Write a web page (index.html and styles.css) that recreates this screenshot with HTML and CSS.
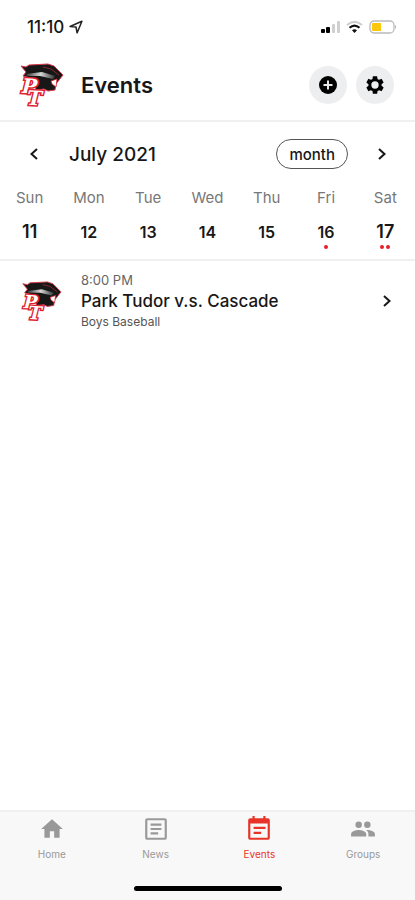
FILE: index.html
```html
<!DOCTYPE html>
<html lang="en">
<head>
<meta charset="utf-8">
<meta name="viewport" content="width=device-width, initial-scale=1">
<title>Events</title>
<link rel="stylesheet" href="styles.css">
</head>
<body>
<svg class="defs" aria-hidden="true">
  <defs>
    <linearGradient id="brim" x1="0" x2="1" y1="0" y2="0">
      <stop offset="0" stop-color="#333"/><stop offset=".5" stop-color="#d8d8d8"/><stop offset="1" stop-color="#333"/>
    </linearGradient>
    <symbol id="logo" viewBox="0 0 46 44">
      <path d="M3 3 8 4 11 2 30 1 36 3 45 12 38 21 37 27 30 28 26 26 18 27 16 16 5 13 8 9Z" fill="#171717" stroke="#d8394a" stroke-width="1" stroke-linejoin="round"/>
      <path d="M8 11 24 9 37 13 35 16 22 13 9 13Z" fill="url(#brim)"/>
      <path d="M25 4 33 6 41 12" fill="none" stroke="#8e2530" stroke-width="1"/>
      <path d="M39 16 33 18 34 21 38 24Z" fill="#fff" stroke="#d71f2f" stroke-width=".8"/>
      <g class="monogram">
        <text x="4" y="30" transform="rotate(3 8 24)">P</text>
        <text x="9" y="42" transform="rotate(3 14 36)">T</text>
      </g>
    </symbol>
    <symbol id="chevron" viewBox="0 0 10 14">
      <path d="M2 2 7.500 7 2 12" fill="none" stroke="currentColor" stroke-width="2"/>
    </symbol>
  </defs>
</svg>
<div class="app">
  <div class="status">
    <div class="clock">11:10
      <svg width="14" height="14" viewBox="0 0 13 13" aria-hidden="true"><path d="M1 6 12 1.200 7.500 12 6.500 6.500Z" fill="none" stroke="#222" stroke-width="1.400" stroke-linejoin="round"/></svg>
    </div>
    <div class="signals">
      <svg width="19" height="14" viewBox="0 0 19 14" aria-hidden="true"><rect x="0" y="9" width="4" height="4" rx="1"/><rect x="5" y="7" width="4" height="6" rx="1"/><g fill="#d0d0d0"><rect x="11" y="4" width="3" height="9" rx="1"/><rect x="16" y="1" width="3" height="12" rx="1"/></g></svg>
      <svg width="17" height="14" viewBox="0 0 17 14" fill="none" aria-hidden="true"><path d="M1 5Q8.500-1.500 16 5" stroke="#ccc" stroke-width="1.800"/><path d="M3.500 7.800Q8.500 3.300 13.500 7.800" stroke="#111" stroke-width="2.200"/><path d="M6 10.200Q8.500 8.400 11 10.200L8.500 13Z" fill="#111"/></svg>
      <svg width="28" height="14" viewBox="0 0 28 14" aria-hidden="true"><rect x="1" y="1" width="24" height="12" rx="4" fill="#fff" stroke="#bbb" stroke-width="1.300"/><path d="M4 3H12V11H4Q3 11 3 10V4Q3 3 4 3Z" fill="#fdc70c"/><path d="M26 5Q28 7 26 9Z" fill="#aaa"/></svg>
    </div>
  </div>
  <header class="header">
    <svg class="logo" role="img" aria-label="Park Tudor"><use href="#logo"/></svg>
    <h1>Events</h1>
    <button class="round" aria-label="Add event"><svg width="20" height="20" viewBox="0 0 20 20" aria-hidden="true"><circle cx="10" cy="10" r="9"/><path d="M10 5.500V14.500M5.500 10H14.500" stroke="#e8eaeb" stroke-width="2"/></svg></button>
    <button class="round" aria-label="Settings"><svg width="22" height="22" viewBox="0 0 24 24" aria-hidden="true"><path fill-rule="evenodd" d="M19.140 12.940c.040-.300.060-.610.060-.940s-.020-.640-.070-.940l2.030-1.580a.49.49 0 0 0 .120-.610l-1.920-3.320a.49.49 0 0 0-.590-.220l-2.390.960a7 7 0 0 0-1.620-.940l-.360-2.540A.48.48 0 0 0 13.920 2.400h-3.840a.48.48 0 0 0-.480.410l-.360 2.540a7 7 0 0 0-1.620.940l-2.390-.960a.48.48 0 0 0-.590.220L2.740 8.870a.48.48 0 0 0 .120.610l2.030 1.580a7 7 0 0 0 0 1.880l-2.030 1.580a.49.49 0 0 0-.120.610l1.920 3.320c.120.220.370.290.590.220l2.390-.960a7 7 0 0 0 1.620.940l.360 2.540c.050.240.240.410.480.410h3.840c.240 0 .440-.170.470-.410l.360-2.540a7 7 0 0 0 1.620-.940l2.390.960c.220.080.470 0 .590-.220l1.920-3.320a.48.48 0 0 0-.120-.610zM12 16a4 4 0 1 1 0-8 4 4 0 0 1 0 8z"/></svg></button>
  </header>
  <section class="calendar">
    <div class="month-bar">
      <button class="step" aria-label="Previous week"><svg class="chevron back"><use href="#chevron"/></svg></button>
      <h2>July 2021</h2>
      <button class="mode">month</button>
      <button class="step" aria-label="Next week"><svg class="chevron"><use href="#chevron"/></svg></button>
    </div>
    <table class="week">
      <thead><tr><th>Sun</th><th>Mon</th><th>Tue</th><th>Wed</th><th>Thu</th><th>Fri</th><th>Sat</th></tr></thead>
      <tbody><tr>
        <td class="big">11<div class="dots"></div></td><td>12<div class="dots"></div></td><td>13<div class="dots"></div></td><td>14<div class="dots"></div></td><td>15<div class="dots"></div></td>
        <td>16<div class="dots"><i></i></div></td><td class="big">17<div class="dots"><i></i><i></i></div></td>
      </tr></tbody>
    </table>
  </section>
  <main>
    <a class="event" href="#event">
      <svg class="logo small" aria-hidden="true"><use href="#logo"/></svg>
      <div class="details">
        <div class="time">8:00 PM</div>
        <div class="title">Park Tudor v.s. Cascade</div>
        <div class="team">Boys Baseball</div>
      </div>
      <svg class="chevron" aria-hidden="true"><use href="#chevron"/></svg>
    </a>
  </main>
  <footer class="bottom">
    <nav>
      <a href="#home"><svg viewBox="0 0 24 24" aria-hidden="true"><path d="M10 20v-6h4v6h5v-8h3L12 3 2 12h3v8z"/></svg>Home</a>
      <a href="#news"><svg viewBox="0 0 24 24" aria-hidden="true"><rect x="3" y="3" width="18" height="18" rx="1" fill="none" stroke="currentColor" stroke-width="2"/><path d="M7 7h10v2H7zM7 11h10v2H7zM7 15h7v2H7z"/></svg>News</a>
      <a href="#events" class="active" aria-current="page"><svg viewBox="0 0 24 24" aria-hidden="true"><path fill-rule="evenodd" d="M20 2h-2V0h-2v2H8V0H6v2H4a2 2 0 0 0-2 2v16c0 1.100.900 2 2 2h16a2 2 0 0 0 2-2V4a2 2 0 0 0-2-2zm0 18H4V7h16zM7 10h11v2H7zM7 14.500h7v2H7z"/></svg>Events</a>
      <a href="#groups"><svg viewBox="0 0 24 24" aria-hidden="true"><path d="M16 11a3 3 0 1 0 0-6 3 3 0 0 0 0 6zm-8 0a3 3 0 1 0 0-6 3 3 0 0 0 0 6zm0 2c-2.330 0-7 1.170-7 3.500V19h14v-2.500C15 14.170 10.330 13 8 13zm8 0c-.290 0-.620.020-.970.050C16.190 13.890 17 15.020 17 16.500V19h6v-2.500c0-2.330-4.670-3.500-7-3.500z"/></svg>Groups</a>
    </nav>
    <div class="handle"></div>
  </footer>
</div>
</body>
</html>
```
FILE: styles.css
```css
* { box-sizing: border-box; }
body { margin: 0; background: #fff; color: #171717; font-family: Inter, "Liberation Sans", sans-serif; }
h1, h2 { margin: 0; font-weight: 600; }
button { padding: 0; border: 0; background: none; color: inherit; font: inherit; cursor: pointer; }
a { color: inherit; text-decoration: none; }
svg { display: block; flex: none; }
.defs { position: absolute; width: 0; height: 0; }
.app { display: flex; flex-direction: column; min-height: 100vh; }

.status { display: flex; justify-content: space-between; align-items: center; height: 54px; padding: 0 18px 0 27px; }
.clock { display: flex; align-items: center; gap: 5px; font-size: 17px; font-weight: 500; }
.signals { display: flex; align-items: center; gap: 6px; }

.header { display: flex; align-items: center; gap: 9px; height: 68px; padding: 0 21px 4px 18px; border-bottom: 2px solid #f0f0f0; }
.header h1 { flex: 1; padding-left: 8px; font-size: 22px; }
.logo { width: 46px; height: 44px; }
.small { width: 42px; height: 40px; }
.monogram { font: italic 700 20px "DejaVu Serif", "Liberation Serif", serif; fill: #fff; stroke: #e0202f; stroke-width: 3px; paint-order: stroke; }
.round { display: grid; place-items: center; width: 38px; height: 38px; border-radius: 50%; background: #eceeef; }

.calendar { border-bottom: 2px solid #f0f0f0; }
.month-bar { display: flex; align-items: center; height: 64px; padding: 0 18px 0 19px; }
.month-bar h2 { flex: 1; padding-left: 20px; font-size: 19px; font-weight: 500; }
.step { display: grid; place-items: center; width: 30px; height: 30px; }
.chevron { width: 10px; height: 14px; }
.back { transform: scaleX(-1); }
.mode { height: 30px; margin-right: 19px; padding: 0 12px; border: 1px solid #555; border-radius: 15px; font-size: 15px; font-weight: 500; }
.week { width: 100%; table-layout: fixed; border-collapse: collapse; text-align: center; }
.week th { height: 22px; padding: 0; color: #777; font-size: 15px; font-weight: 400; }
.week td { height: 51px; padding: 11px 0 0; font-size: 16px; font-weight: 600; line-height: 26px; vertical-align: top; }
.week .big { font-size: 18px; }
.dots { display: flex; justify-content: center; gap: 2px; height: 4px; }
.dots i { width: 4px; height: 4px; border-radius: 50%; background: #e8202a; }

main { flex: 1; }
.event { display: flex; align-items: center; height: 80px; padding: 0 23px 0 20px; }
.details { flex: 1; padding-left: 19px; }
.time { color: #666; font-size: 13px; line-height: 18px; }
.title { font-size: 17px; font-weight: 500; line-height: 24px; }
.team { color: #555; font-size: 12px; line-height: 18px; }

.bottom { border-top: 2px solid #f0f0f0; background: #f8f8f8; }
nav { display: grid; grid-template-columns: repeat(4, 1fr); height: 74px; }
nav a { display: flex; flex-direction: column; align-items: center; gap: 5px; padding-top: 4px; color: #999; font-size: 10px; line-height: 14px; }
nav svg { width: 26px; height: 26px; fill: currentColor; }
nav .active { color: #e83428; }
.handle { width: 148px; height: 5px; margin: 0 auto 9px; border-radius: 3px; background: #000; }
```
